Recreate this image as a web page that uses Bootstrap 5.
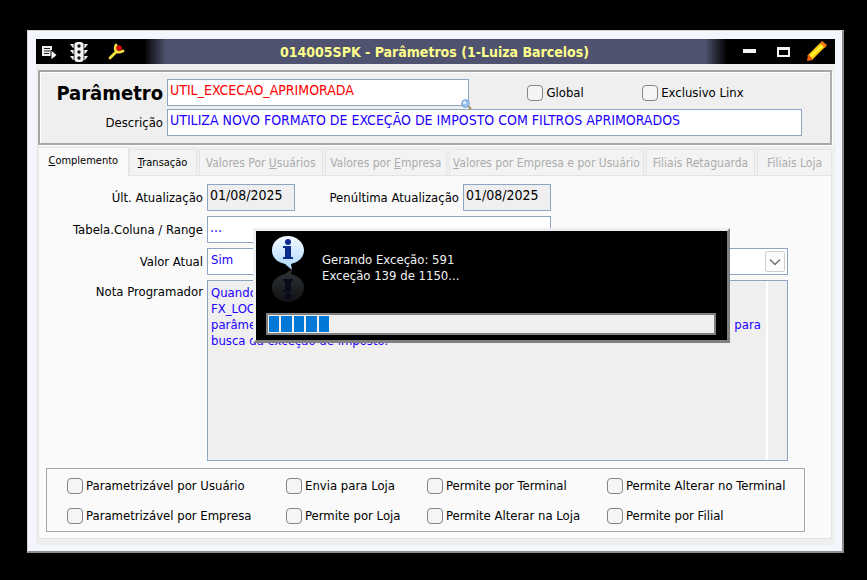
<!DOCTYPE html>
<html lang="pt-BR">
<head>
<meta charset="utf-8">
<meta name="viewport" content="width=device-width, initial-scale=1">
<title>014005SPK - Parâmetros</title>
<link href="https://cdn.jsdelivr.net/npm/bootstrap@5.3.0/dist/css/bootstrap.min.css" rel="stylesheet">
<style>
  body { background: #000; color: #000; font: 13px/16px "DejaVu Sans Condensed", "DejaVu Sans", sans-serif; padding: 30px 23px 27px 27px; }
  .app-window { background: #f3f6fc; border: 1px solid #d4d4d4; border-right: 2px solid #8c8c8c; border-bottom: 2px solid #8c8c8c; padding: 8px 7px 6px 8px; }
  .title-strip { height: 25px; padding: 0 8px 0 6px; background: linear-gradient(90deg, #000 108px, #50536f 130px, #50536f calc(100% - 130px), #000 calc(100% - 108px)); }
  .title-strip h1 { color: #ffff8c; font-size: 14px; line-height: 16px; font-weight: 700; }
  .title-side { width: 88px; }
  .title-strip button { background: none; border: 0; padding: 0; line-height: 0; }
  .form-area { background: #efefef; padding: 6px 3px 6px 2px; }
  .framed { border: 2px solid #a6a6a6; border-right-color: #b0b0b0; }
  .header-frame { padding: 7px 28px 7px 0; box-shadow: inset 1px 1px #fff, 1px 1px #fff; gap: 3px; }
  .header-label { width: 123px; text-align: right; }
  .big-label { font-size: 20px; line-height: 24px; font-weight: 700; }
  .field { border: 1px solid #8ba5c3; outline: 0; background: #fff; color: #2200ff; font: inherit; font-size: 14px; padding: 2px 2px 7px 2px; height: 27px; border-radius: 0; min-width: 0; }
  .field-red { color: #f00; width: 302px; }
  .field-off { background: #efefef; color: #000; }
  .field-date { width: 88px; }
  .check { gap: 3px; white-space: nowrap; }
  .check input { appearance: none; width: 16px; height: 16px; margin: 0; border: 1px solid #858585; border-radius: 4px; background: #f5f5f5; flex: none; }
  .check input:checked { background: #0078d7; }
  .lens { right: -3px; bottom: -4px; }
  .tab-strip { margin-top: 2px; gap: 2px; }
  .tab-strip button { font-size: 11px; line-height: 14px; border: 1px solid #e6e6e6; border-bottom: 0; background: #f3f3f3; color: #000; padding: 6px 0 5px; white-space: nowrap; margin-top: 2px; min-width: 0; overflow: hidden; }
  .tab-strip button:disabled { color: #acacac; font-size: 12px; }
  .tab-strip button.active { background: #fafafa; margin: 0 -2px -1px 0; padding: 5px 0 8px; z-index: 1; }
  .t1 { flex: 90 1 0; } .t2 { flex: 67 1 0; } .t3 { flex: 124 1 0; } .t4 { flex: 122 1 0; } .t5 { flex: 196 1 0; } .t6 { flex: 109 1 0; } .t7 { flex: 74 1 0; }
  .tab-body { background: #fafafa; border: 1px solid #e3e3e3; padding: 8px 26px 6px 7px; gap: 5px; }
  .side-label { width: 157px; text-align: right; flex: none; }
  .form-line { gap: 4px; padding-right: 17px; }
  .row-rest { flex: 0 1 233px; }
  .range-field { width: 344px; }
  .combo { appearance: none; font-size: 13px; height: 27px; padding: 3px 3px 6px; }
  .combo-arrow { top: 3px; right: 3px; width: 20px; height: 21px; border: 1px solid #cfcfcf; border-radius: 2px; background: #fdfdfd; pointer-events: none; }
  .note { border: 1px solid #8ba5c3; background: #efefef; min-height: 160px; }
  .note textarea { border: 0; background: none; color: #2200ff; padding: 4px 3px; resize: none; white-space: pre; overflow: hidden; outline: 0; font: inherit; min-width: 0; }
  .note-bar { width: 21px; border-left: 2px solid #fff; }
  .options { display: grid; grid-template-columns: 219fr 141fr 180fr 197fr; row-gap: 14px; border: 1px solid #a6a6a6; margin-top: 2px; padding: 9px 0 7px 20px; }
  .progress-window { left: 225px; top: 197px; width: 477px; background: #000; border: 3px solid #efefef; border-right-color: #808080; border-bottom-color: #808080; color: #f2f2f2; padding: 4px 11px 5px 10px; }
  .progress-text { padding: 17px 0 0 18px; }
  .track { height: 22px; border: 2px solid #808080; background: #efefef; padding: 1px; margin-top: 6px; }
  .track-fill { gap: 2px; height: 100%; }
  .track-fill span { background: #0078d7; flex: 1 1 0; }
</style>
</head>
<body class="min-vh-100 d-flex flex-column">
<main class="app-window position-relative flex-grow-1 d-flex flex-column">
  <header class="title-strip d-flex align-items-center justify-content-between">
    <div class="title-side d-flex align-items-center">
      <button type="button" aria-label="Menu"><svg width="16" height="16" viewBox="0 0 16 16"><path d="M0 2h10v10H0z" fill="#eee"/><path d="M2 4.500h6M2 7h6M2 9.500h5" stroke="#222" stroke-width="1.200"/><path d="M9 6l6 5-6 5z" fill="#fff" stroke="#111"/></svg></button>
      <button type="button" aria-label="Semáforo" class="ms-2 ps-1"><svg width="18" height="22" viewBox="0 0 18 22"><g fill="#f4f4f4"><rect x="4" y="1" width="10" height="20" rx="4"/><path d="M0 3h18l-3 4H3zM0 9h18l-3 4H3zM0 15h18l-3 4H3z"/></g><g fill="#111"><circle cx="9" cy="5" r="1.700"/><circle cx="9" cy="11" r="1.700"/><circle cx="9" cy="17" r="1.700"/></g><path d="M4 2v18M14 2v18" stroke="#111" stroke-width="0.800"/></svg></button>
      <button type="button" aria-label="Ferramentas" class="ms-3 ps-1"><svg width="18" height="18" viewBox="0 0 18 18"><path d="M2 15l6-6M8 2c-2 5 0 9 7 6" fill="none" stroke="#f6e23c" stroke-width="2.800" stroke-linecap="round"/><circle cx="11" cy="5" r="2.800" fill="#d80c0c"/></svg></button>
    </div>
    <h1 class="m-0 text-nowrap">014005SPK - Parâmetros (1-Luiza Barcelos)</h1>
    <div class="title-side d-flex align-items-center justify-content-end">
      <button type="button" aria-label="Minimizar"><svg width="14" height="14"><path d="M0 4h13v4H0z" fill="#f4f4f4"/></svg></button>
      <button type="button" aria-label="Maximizar" class="ms-3 me-3 ps-1"><svg width="13" height="14"><path d="M1 3h11v8H1z" fill="none" stroke="#f4f4f4" stroke-width="2"/><path d="M0 2h13v3H0z" fill="#f4f4f4"/></svg></button>
      <button type="button" aria-label="Editar"><svg width="21" height="21" viewBox="0 0 21 21"><path d="M1 20l1-6 4 5z" fill="#f26a0a"/><path d="M2 14L14 2l5 4L6 19z" fill="#ffc815"/><path d="M4 16L17 4" stroke="#ffff38" stroke-width="2"/><path d="M14 2l2-2 5 4-2 3z" fill="#f47b12"/><path d="M2 14l4 5" stroke="#e85400" stroke-width="2"/></svg></button>
    </div>
  </header>

  <div class="form-area flex-grow-1 d-flex flex-column">
    <section class="framed header-frame d-flex flex-column">
      <div class="d-flex align-items-center">
        <label for="param" class="header-label big-label flex-shrink-0">Parâmetro</label>
        <div class="position-relative ms-1 d-flex">
          <input id="param" class="field field-red" value="UTIL_EXCECAO_APRIMORADA">
          <svg class="lens position-absolute" width="11" height="11" viewBox="0 0 11 11"><path d="M6 6l4 4" stroke="#b48a45" stroke-width="2"/><circle cx="4.500" cy="4.500" r="3.800" fill="#9cc4ee" stroke="#6f9fd0"/><circle cx="3.500" cy="3.500" r="1.500" fill="#e8f4ff"/></svg>
        </div>
        <div class="flex-grow-1 d-flex justify-content-evenly">
          <label class="check d-flex align-items-center"><input type="checkbox">Global</label>
          <label class="check d-flex align-items-center"><input type="checkbox">Exclusivo Linx</label>
        </div>
      </div>
      <div class="d-flex align-items-center">
        <label for="descr" class="header-label flex-shrink-0">Descrição</label>
        <input id="descr" class="field flex-grow-1 ms-1" value="UTILIZA NOVO FORMATO DE EXCEÇÃO DE IMPOSTO COM FILTROS APRIMORADOS">
      </div>
    </section>

    <div class="tab-strip d-flex" role="tablist">
      <button type="button" role="tab" class="t1 active position-relative" aria-selected="true"><u>C</u>omplemento</button>
      <button type="button" role="tab" class="t2"><u>T</u>ransação</button>
      <button type="button" role="tab" class="t3" disabled>Valores Por <u>U</u>suários</button>
      <button type="button" role="tab" class="t4" disabled>Valores por <u>E</u>mpresa</button>
      <button type="button" role="tab" class="t5" disabled><u>V</u>alores por Empresa e por Usuário</button>
      <button type="button" role="tab" class="t6" disabled>Filiais Retaguarda</button>
      <button type="button" role="tab" class="t7" disabled>Filiais Loja</button>
    </div>

    <section class="tab-body flex-grow-1 d-flex flex-column">
      <div class="form-line d-flex align-items-center">
        <label for="last" class="side-label">Últ. Atualização</label>
        <input id="last" class="field field-off field-date" value="01/08/2025" readonly>
        <label for="prev" class="ms-auto text-nowrap">Penúltima Atualização</label>
        <input id="prev" class="field field-off field-date" value="01/08/2025" readonly>
        <span class="row-rest"></span>
      </div>
      <div class="form-line d-flex align-items-center">
        <label for="range" class="side-label">Tabela.Coluna / Range</label>
        <input id="range" class="field range-field" value="...">
      </div>
      <div class="form-line d-flex align-items-center">
        <label for="current" class="side-label">Valor Atual</label>
        <div class="position-relative flex-grow-1 d-flex">
          <select id="current" class="field combo flex-grow-1"><option>Sim</option></select>
          <span class="combo-arrow position-absolute d-flex align-items-center justify-content-center"><svg width="12" height="8" viewBox="0 0 12 8"><path d="M1 1.500l5 5 5-5" fill="none" stroke="#707070" stroke-width="1.500"/></svg></span>
        </div>
      </div>
      <div class="form-line flex-grow-1 d-flex">
        <label for="note" class="side-label pt-1">Nota Programador</label>
        <div class="note flex-grow-1 d-flex">
          <textarea id="note" class="flex-grow-1" readonly>Quando ativo, utiliza a nova função
FX_LOCALIZA_EXCECAO_IMPOSTO, com os filtros.
parâmetro ativo utiliza os novos filtros de operação, produto, cliente e local de destino    para
busca da exceção de imposto.</textarea>
          <div class="note-bar"></div>
        </div>
      </div>
      <div class="options">
        <label class="check d-flex align-items-center"><input type="checkbox">Parametrizável por Usuário</label>
        <label class="check d-flex align-items-center"><input type="checkbox">Envia para Loja</label>
        <label class="check d-flex align-items-center"><input type="checkbox">Permite por Terminal</label>
        <label class="check d-flex align-items-center"><input type="checkbox">Permite Alterar no Terminal</label>
        <label class="check d-flex align-items-center"><input type="checkbox">Parametrizável por Empresa</label>
        <label class="check d-flex align-items-center"><input type="checkbox">Permite por Loja</label>
        <label class="check d-flex align-items-center"><input type="checkbox">Permite Alterar na Loja</label>
        <label class="check d-flex align-items-center"><input type="checkbox">Permite por Filial</label>
      </div>
    </section>
  </div>

  <div class="progress-window position-absolute" role="dialog" aria-label="Progresso">
    <div class="d-flex">
      <svg width="38" height="72" viewBox="0 0 38 72">
        <defs>
          <linearGradient id="bubble" x1="0" y1="0" x2="0" y2="1"><stop offset="0" stop-color="#f4faff"/><stop offset="1" stop-color="#a9d6ff"/></linearGradient>
          <linearGradient id="mirror" x1="0" y1="0" x2="0" y2="1"><stop offset="0" stop-color="#303438"/><stop offset="1" stop-color="#101112"/></linearGradient>
        </defs>
        <path d="M22 1C13 1 6 7 6 15s5 12 13 14l7 6-1-6c8-2 13-7 13-14S31 1 22 1z" fill="url(#bubble)"/>
        <g fill="#0b2c8c"><circle cx="22" cy="7" r="3"/><path d="M17 11h8v11h2v2H17v-2h2v-9h-2z"/></g>
        <path d="M22 67C13 67 6 61 6 53s5-12 13-14l7-5-1 5c8 2 13 7 13 14s-7 14-16 14z" fill="url(#mirror)"/>
        <g fill="#080b1c"><circle cx="22" cy="61" r="3"/><path d="M17 57h8V46h2v-2H17v2h2v9h-2z"/></g>
      </svg>
      <div class="progress-text">Gerando Exceção: 591<br>Exceção 139 de 1150...</div>
    </div>
    <div class="track" role="progressbar" aria-label="Exceções geradas" aria-valuemin="0" aria-valuemax="1150" aria-valuenow="139">
      <div class="track-fill d-flex" style="width: 13.5%"><span></span><span></span><span></span><span></span><span></span></div>
    </div>
  </div>
</main>
<script src="https://cdn.jsdelivr.net/npm/bootstrap@5.3.0/dist/js/bootstrap.bundle.min.js"></script>
</body>
</html>
